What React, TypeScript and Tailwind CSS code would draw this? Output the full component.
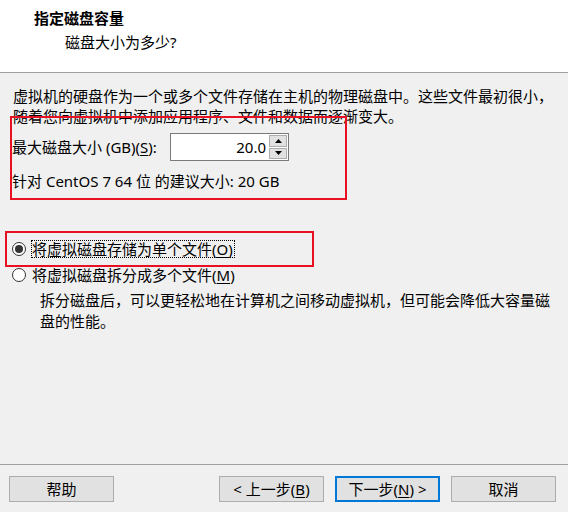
import React, { useState } from 'react';

const font = { fontFamily: '"Noto Sans", "Noto Sans CJK SC", sans-serif' };

// underlined access key, like (S)
const Key: React.FC<{ k: string }> = ({ k }) => (
  <>
    (<span className="underline underline-offset-2">{k}</span>)
  </>
);

const Radio: React.FC<{ checked: boolean; onClick: () => void }> = ({ checked, onClick }) => (
  <span
    onClick={onClick}
    className="flex h-[14px] w-[14px] shrink-0 items-center justify-center rounded-full border border-[#333333] bg-white"
  >
    {checked && <span className="h-[8px] w-[8px] rounded-full bg-[#333333]" />}
  </span>
);

const Button: React.FC<{ children: React.ReactNode; focused?: boolean }> = ({ children, focused }) => (
  <button
    className={`flex h-[26px] w-[105px] items-center justify-center bg-[#e1e1e1] text-[15px] leading-none text-black ${
      focused ? 'border-2 border-[#0078d7]' : 'border border-[#adadad]'
    }`}
  >
    {children}
  </button>
);

export default function App() {
  const [size, setSize] = useState(20);
  const [single, setSingle] = useState(true);

  return (
    <div className="relative flex h-[512px] w-[568px] flex-col overflow-hidden bg-[#f0f0f0] text-[15px] leading-[20px] text-black" style={font}>
      {/* Header */}
      <div className="h-[73px] shrink-0 border-b border-[#a0a0a0] bg-white pt-[8px]">
        <div className="pl-[34px] font-bold">指定磁盘容量</div>
        <div className="mt-[4px] pl-[65px]">磁盘大小为多少?</div>
      </div>

      {/* Body */}
      <div className="flex flex-1 flex-col px-[13px]">
        <p className="mt-[13px]">
          虚拟机的硬盘作为一个或多个文件存储在主机的物理磁盘中。这些文件最初很小，
          <br />
          随着您向虚拟机中添加应用程序、文件和数据而逐渐变大。
        </p>

        <div className="mt-[7px] flex h-[28px] items-center">
          <span className="-ml-px w-[158px]">
            最大磁盘大小 (GB)<Key k="S" />:
          </span>
          <div className="flex h-[28px] border border-[#7a7a7a] bg-white">
            <div className="flex w-[97px] items-center justify-end pr-[2px]">{size.toFixed(1)}</div>
            <div className="flex w-[20px] flex-col gap-px p-px">
              <button
                onClick={() => setSize(size + 1)}
                className="flex flex-1 items-center justify-center border border-[#adadad] bg-[#e1e1e1]"
              >
                <svg width="7" height="4" viewBox="0 0 7 4"><path d="M0 4 L3.5 0 L7 4 Z" fill="#000" /></svg>
              </button>
              <button
                onClick={() => setSize(Math.max(1, size - 1))}
                className="flex flex-1 items-center justify-center border border-[#adadad] bg-[#e1e1e1]"
              >
                <svg width="7" height="4" viewBox="0 0 7 4"><path d="M0 0 L3.5 4 L7 0 Z" fill="#000" /></svg>
              </button>
            </div>
          </div>
        </div>

        <div className="mt-[10px] -ml-px">针对 CentOS 7 64 位 的建议大小: 20 GB</div>

        <div className="mt-[48px] flex h-[20px] items-center gap-[5px] -ml-px">
          <Radio checked={single} onClick={() => setSingle(true)} />
          <span className="border border-dotted border-black pr-px leading-[16px]">
            将虚拟磁盘存储为单个文件<Key k="O" />
          </span>
        </div>
        <div className="mt-[6px] flex h-[20px] items-center gap-[6px] -ml-px">
          <Radio checked={!single} onClick={() => setSingle(false)} />
          <span>
            将虚拟磁盘拆分成多个文件<Key k="M" />
          </span>
        </div>
        <p className="mt-[5px] pl-[27px] leading-[21px]">
          拆分磁盘后，可以更轻松地在计算机之间移动虚拟机，但可能会降低大容量磁
          <br />
          盘的性能。
        </p>
      </div>

      {/* Footer */}
      <div className="flex h-[48px] shrink-0 border-t border-[#a0a0a0] pt-[11px] pl-[9px]">
        <Button>帮助</Button>
        <div className="ml-[105px] flex gap-[11px]">
          <Button>&lt; 上一步<Key k="B" /></Button>
          <Button focused>下一步<Key k="N" /> &gt;</Button>
          <Button>取消</Button>
        </div>
      </div>

      {/* red annotation boxes */}
      <div className="pointer-events-none absolute left-[10px] top-[116px] h-[84px] w-[337px] border-2 border-[#e81123]" />
      <div className="pointer-events-none absolute left-[5px] top-[231px] h-[36px] w-[309px] border-2 border-[#e81123]" />
    </div>
  );
}
